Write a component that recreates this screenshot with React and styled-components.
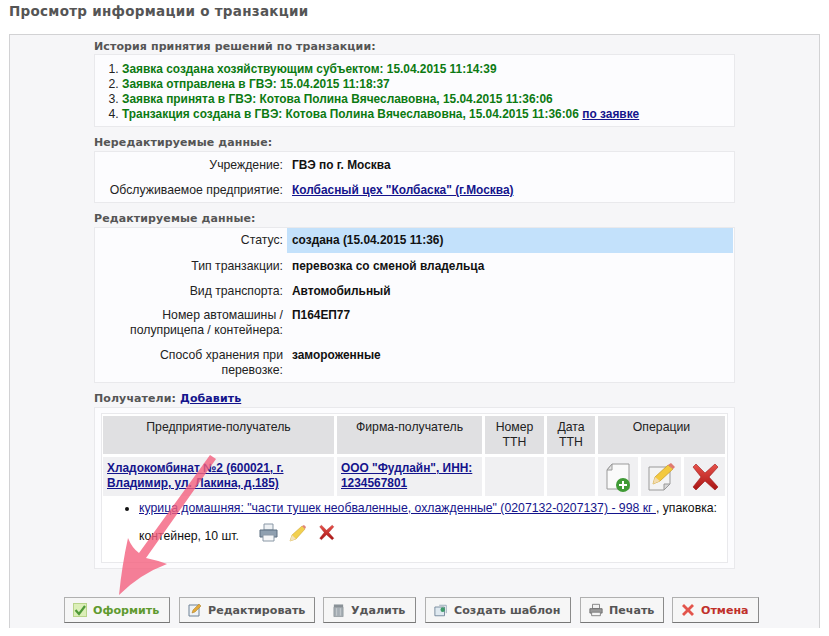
import styled, { createGlobalStyle } from "styled-components";

const GlobalStyle = createGlobalStyle`
  html, body {
    margin: 0;
    padding: 0;
    background: #fff;
  }
  a {
    color: #14148c;
  }
`;

const Page = styled.div`
  position: relative;
  width: 829px;
  height: 636px;
  overflow: hidden;
  font-family: "Liberation Sans", Arial, sans-serif;
  font-size: 12.25px;
  line-height: 15px;
  color: #222;
`;

const Title = styled.h1`
  margin: 0;
  padding: 3px 0 0 9px;
  height: 34px;
  box-sizing: border-box;
  font-family: "DejaVu Sans", Verdana, sans-serif;
  font-size: 13.5px;
  line-height: 17px;
  font-weight: bold;
  letter-spacing: 0.28px;
  color: #555;
`;

const Panel = styled.div`
  box-sizing: border-box;
  width: 811px;
  height: 594px;
  margin-left: 9px;
  padding: 4px 84px 0;
  background: #f6f6f8;
  border: 1px solid #d2d2d4;
  border-bottom: none;
`;

const Heading = styled.div`
  height: ${(p) => (p.$first ? "15px" : "16px")};
  margin-top: ${(p) => (p.$first ? 0 : "8px")};
  font-family: "DejaVu Sans", Verdana, sans-serif;
  font-size: 11px;
  line-height: 16px;
  font-weight: bold;
  letter-spacing: 0.1px;
  color: #555;
`;

const Box = styled.div`
  box-sizing: border-box;
  width: 641px;
  height: ${(p) => p.$h}px;
  padding-top: ${(p) => p.$top || 0}px;
  background: #fcfcfe;
  border: 1px solid #e9e9ec;
`;

const History = styled.ol`
  margin: 0;
  padding: 7px 0 4px 27px;
`;

const Green = styled.span`
  color: #0c7a12;
  font-size: 11.9px;
  font-weight: bold;
`;

const Strong = styled.a`
  font-size: 11.9px;
  font-weight: bold;
`;

const InfoRow = styled.div`
  display: grid;
  grid-template-columns: 188px 1fr;
  column-gap: 9px;
  margin-top: ${(p) => p.$shift || 0}px;
`;

const Label = styled.div`
  padding: 5px 0 5px ${(p) => (p.$narrow ? "24px" : 0)};
  text-align: right;
`;

const Value = styled.div`
  padding: 5px 0;
  font-size: 11.9px;
  font-weight: bold;
  color: #111;
`;

const StatusRow = styled.div`
  display: grid;
  grid-template-columns: 188px 1fr;
  margin: 0 1px 1px 0;
`;

const StatusValue = styled.div`
  padding: 5px 0 5px 5px;
  margin-left: 4px;
  background: #c3e1fb;
  font-size: 11.9px;
  font-weight: bold;
  color: #111;
`;

const Inner = styled.div`
  box-sizing: border-box;
  width: 627px;
  height: 150px;
  margin: 5px 0 0 6px;
  padding: 2px 1px 0;
  background: #fff;
  border: 1px solid #e9e9ec;
`;

const Grid = styled.div`
  display: grid;
  grid-template-columns: 231px 145px 59px 48px 40px 40px 41px;
  grid-template-rows: 38px 39px;
  gap: 3px;
`;

const HeadCell = styled.div`
  grid-column: ${(p) => p.$span || "auto"};
  padding-top: 4px;
  background: #e0e0e2;
  text-align: center;
  color: #222;
`;

const Cell = styled.div`
  padding: 4px 4px 0;
  background: #f0f0f2;
  font-size: 11.9px;
  font-weight: bold;
`;

const IconCell = styled.div`
  display: flex;
  align-items: center;
  justify-content: center;
  background: #f0f0f2;
`;

const Goods = styled.ul`
  margin: -2px 0 0;
  padding: 0 6px 0 36px;
  color: #111;
  li {
    line-height: 28px;
  }
`;

const SmallIcons = styled.span`
  display: inline-flex;
  align-items: center;
  gap: 11px;
  margin: -8px 0 0 20px;
  vertical-align: middle;
`;

const Buttons = styled.div`
  display: flex;
  width: max-content;
  margin-top: 28px;
  margin-left: -30px;
`;

const Button = styled.button`
  box-sizing: border-box;
  display: flex;
  flex: none;
  align-items: center;
  gap: 6px;
  width: ${(p) => p.$w}px;
  height: 26px;
  margin-right: ${(p) => p.$gap}px;
  padding: 0 0 0 8px;
  background: #f6f6f6;
  border: 1px solid #b0b0b0;
  border-right-color: #8a8a8a;
  border-bottom-color: #777;
  font-family: "DejaVu Sans", Verdana, sans-serif;
  font-size: 11.1px;
  font-weight: bold;
  white-space: nowrap;
  color: ${(p) => p.$color || "#555"};
`;

const ArrowLayer = styled.svg`
  position: absolute;
  left: 0;
  top: 0;
  pointer-events: none;
`;

const DocPlusIcon = () => (
  <svg width="30" height="30" viewBox="0 0 30 30">
    <path d="M9 2H26V27H4V8z" fill="#fafafa" stroke="#9a9a9a" />
    <path d="M9 2V8H4z" fill="#e4e4e4" stroke="#9a9a9a" />
    <circle cx="20" cy="23" r="7" fill="#3f9a35" />
    <path d="M20 19v8M16 23h8" stroke="#fff" strokeWidth="2" />
  </svg>
);

const DocPencilIcon = () => (
  <svg width="30" height="30" viewBox="0 0 30 30">
    <path d="M3 5H24V22L18 28H3z" fill="#f4f4f4" stroke="#9a9a9a" />
    <path d="M24 22H18V28z" fill="#d8d8d8" stroke="#9a9a9a" />
    <path d="M7 22L9 15L22 3L27 7L14 19z" fill="#f3c93f" stroke="#c79a22" strokeWidth="0.7" />
    <path d="M22 3L25 1L29 5L27 7z" fill="#e07a70" />
    <path d="M7 22L9 15L14 19z" fill="#f3dcae" />
  </svg>
);

const CrossIcon = ({ size = 30 }) => (
  <svg width={size} height={size} viewBox="0 0 30 30">
    <defs>
      <linearGradient id="crossRed" x1="0" y1="0" x2="0" y2="1">
        <stop offset="0" stopColor="#e8524a" />
        <stop offset="1" stopColor="#a81414" />
      </linearGradient>
    </defs>
    <path
      d="M3 5L6 2L15 11L25 2L28 5L19 15L28 25L25 28L15 19L6 28L3 25L11 15z"
      fill="url(#crossRed)"
      stroke="#9c1a1a"
      strokeWidth="0.6"
    />
  </svg>
);

const PrinterIcon = () => (
  <svg width="19" height="19" viewBox="0 0 19 19">
    <path d="M5 1H14V7H5z" fill="#eef1f4" stroke="#8a98a6" />
    <path d="M1 7H18V14H1z" fill="#8fa0b0" stroke="#5d6f80" />
    <path d="M4 12H15V18H4z" fill="#f6f7f8" stroke="#8a98a6" />
  </svg>
);

const PencilIcon = () => (
  <svg width="18" height="18" viewBox="0 0 18 18">
    <path d="M1 17L3 11L13 2L16 5L7 15z" fill="#f2d04e" stroke="#d0a838" strokeWidth="0.6" />
    <path d="M13 2L15 1L17 3L16 5z" fill="#e0867a" />
    <path d="M1 17L3 11L7 15z" fill="#f3e2bb" />
  </svg>
);

const CheckIcon = () => (
  <svg width="14" height="14" viewBox="0 0 14 14">
    <rect x="0.5" y="0.5" width="13" height="13" fill="#dcefb8" stroke="#b8d48a" />
    <path d="M2.5 7L6 11L12 3" fill="none" stroke="#4f9a3a" strokeWidth="2.2" />
  </svg>
);

const EditIcon = () => (
  <svg width="14" height="14" viewBox="0 0 14 14">
    <path d="M1 2H11V13H1z" fill="#eef2f6" stroke="#6f8296" />
    <path d="M4 10L5 7L11 1L13 3L7 9z" fill="#e2a93c" stroke="#a87a20" strokeWidth="0.5" />
  </svg>
);

const TrashIcon = () => (
  <svg width="13" height="15" viewBox="0 0 14 15">
    <path d="M2 1H12V4H2z" fill="#8a9298" />
    <path d="M2 4H12V14H2z" fill="#a6aeb4" stroke="#7c848a" strokeWidth="0.6" />
    <path d="M5 5V13M9 5V13" stroke="#c9ced2" />
  </svg>
);

const TemplateIcon = () => (
  <svg width="14" height="13" viewBox="0 0 16 14">
    <path d="M1 3H12V13H1z" fill="#dfe9f0" stroke="#6f8296" />
    <path d="M6 1H14V10" fill="none" stroke="#8fa3b4" />
    <circle cx="10" cy="6" r="2.6" fill="#3f9a6a" />
  </svg>
);

const PrintIcon = () => (
  <svg width="14" height="14" viewBox="0 0 16 15">
    <path d="M4 1H12V6H4z" fill="#f2f2f2" stroke="#7c7c7c" />
    <path d="M1 6H15V11H1z" fill="#9a9a9a" stroke="#6a6a6a" />
    <path d="M3 10H13V14H3z" fill="#f4f4f4" stroke="#7c7c7c" />
  </svg>
);

const CancelIcon = () => (
  <svg width="14" height="14" viewBox="0 0 14 14">
    <path d="M1 3L3 1L7 5L11 1L13 3L9 7L13 11L11 13L7 9L3 13L1 11L5 7z" fill="#e2544c" stroke="#f2a8a0" strokeWidth="0.6" />
  </svg>
);

export default function App() {
  return (
    <Page>
      <GlobalStyle />
      <Title>Просмотр информации о транзакции</Title>
      <Panel>
        <Heading $first>История принятия решений по транзакции:</Heading>
        <Box $h={73}>
          <History>
            <li><Green>Заявка создана хозяйствующим субъектом: 15.04.2015 11:14:39</Green></li>
            <li><Green>Заявка отправлена в ГВЭ: 15.04.2015 11:18:37</Green></li>
            <li><Green>Заявка принята в ГВЭ: Котова Полина Вячеславовна, 15.04.2015 11:36:06</Green></li>
            <li>
              <Green>Транзакция создана в ГВЭ: Котова Полина Вячеславовна, 15.04.2015 11:36:06</Green>{" "}
              <Strong href="#">по заявке</Strong>
            </li>
          </History>
        </Box>

        <Heading>Нередактируемые данные:</Heading>
        <Box $h={52} $top={1}>
          <InfoRow>
            <Label>Учреждение:</Label>
            <Value>ГВЭ по г. Москва</Value>
          </InfoRow>
          <InfoRow>
            <Label>Обслуживаемое предприятие:</Label>
            <Value><a href="#">Колбасный цех "Колбаска" (г.Москва)</a></Value>
          </InfoRow>
        </Box>

        <Heading>Редактируемые данные:</Heading>
        <Box $h={156}>
          <StatusRow>
            <Label>Статус:</Label>
            <StatusValue>создана (15.04.2015 11:36)</StatusValue>
          </StatusRow>
          <InfoRow>
            <Label>Тип транзакции:</Label>
            <Value>перевозка со сменой владельца</Value>
          </InfoRow>
          <InfoRow>
            <Label>Вид транспорта:</Label>
            <Value>Автомобильный</Value>
          </InfoRow>
          <InfoRow $shift={-1}>
            <Label $narrow>Номер автомашины / полуприцепа / контейнера:</Label>
            <Value>П164ЕП77</Value>
          </InfoRow>
          <InfoRow>
            <Label $narrow>Способ хранения при перевозке:</Label>
            <Value>замороженные</Value>
          </InfoRow>
        </Box>

        <Heading>Получатели: <a href="#">Добавить</a></Heading>
        <Box $h={162}>
          <Inner>
            <Grid>
              <HeadCell>Предприятие-получатель</HeadCell>
              <HeadCell>Фирма-получатель</HeadCell>
              <HeadCell>Номер ТТН</HeadCell>
              <HeadCell>Дата ТТН</HeadCell>
              <HeadCell $span="span 3">Операции</HeadCell>
              <Cell><a href="#">Хладокомбинат №2 (600021, г. Владимир, ул. Лакина, д.185)</a></Cell>
              <Cell><a href="#">ООО "Фудлайн", ИНН: 1234567801</a></Cell>
              <Cell />
              <Cell />
              <IconCell><DocPlusIcon /></IconCell>
              <IconCell><DocPencilIcon /></IconCell>
              <IconCell><CrossIcon /></IconCell>
            </Grid>
            <Goods>
              <li>
                <a href="#">курица домашняя: "части тушек необваленные, охлажденные" (0207132-0207137) - 998 кг </a>
                , упаковка:
                <br />
                контейнер, 10 шт.
                <SmallIcons>
                  <PrinterIcon />
                  <PencilIcon />
                  <CrossIcon size={17} />
                </SmallIcons>
              </li>
            </Goods>
          </Inner>
        </Box>

        <Buttons>
          <Button $w={106} $gap={9} $color="#5f9a2e"><CheckIcon />Оформить</Button>
          <Button $w={136} $gap={8}><EditIcon />Редактировать</Button>
          <Button $w={93} $gap={9}><TrashIcon />Удалить</Button>
          <Button $w={146} $gap={9}><TemplateIcon />Создать шаблон</Button>
          <Button $w={84} $gap={8}><PrintIcon />Печать</Button>
          <Button $w={87} $gap={0} $color="#c0302a"><CancelIcon />Отмена</Button>
        </Buttons>
      </Panel>

      <ArrowLayer width="829" height="636" viewBox="0 0 829 636">
        <path
          d="M210 455L216 459L146 558Q156 560 167 564Q140 574 119 595Q122 565 128 538Q132 548 139 553z"
          fill="#f4607e"
          opacity="0.8"
        />
      </ArrowLayer>
    </Page>
  );
}
